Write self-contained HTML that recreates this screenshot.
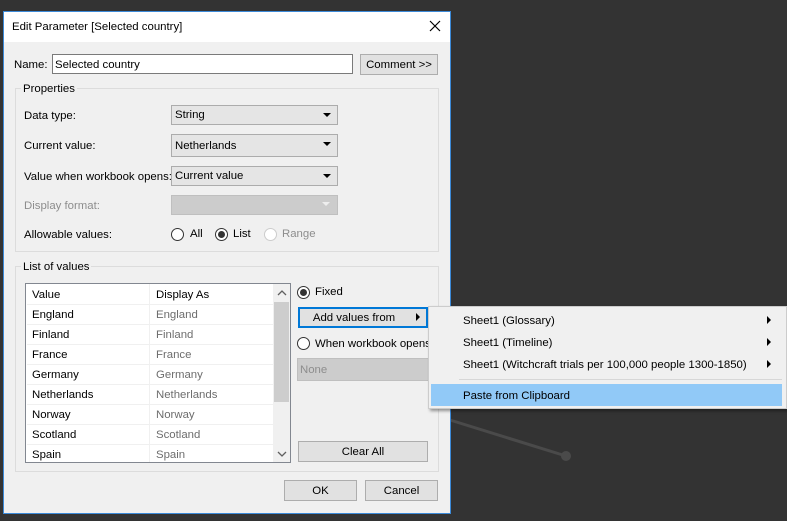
<!DOCTYPE html>
<html><head><meta charset="utf-8"><style>
*{box-sizing:border-box;margin:0;padding:0}
body{width:787px;height:521px;background:#333;position:relative;overflow:hidden;font:11.4px "Liberation Sans",sans-serif;color:#000}
.a{position:absolute}
.t{position:absolute;white-space:nowrap;line-height:16px}
.dlg{left:3px;top:11px;width:448px;height:503px;background:#f0f0f0;border:1px solid #3c8ad8}
.btn{position:absolute;background:#e1e1e1;border:1px solid #adadad;text-align:center;line-height:20px}
.cb{position:absolute;background:#e5e5e5;border:1px solid #acacac;padding-left:3px;line-height:19px}
.cb:after{content:"";position:absolute;right:6px;top:7px;border-left:4px solid transparent;border-right:4px solid transparent;border-top:4px solid #000}
.grp{position:absolute;border:1px solid #dcdcdc}
.rad{position:absolute;width:13px;height:13px;border:1px solid #333;border-radius:50%;background:#fff}
.rad.on:after{content:"";position:absolute;left:2px;top:2px;width:7px;height:7px;border-radius:50%;background:#333}
.row{position:absolute;left:1px;width:248px;height:20px;border-bottom:1px solid #f0f0f0}
.row span{position:absolute;top:4px}
.row .c2{left:129px;color:#6d6d6d}
.arr{position:absolute;border-top:4px solid transparent;border-bottom:4px solid transparent;border-left:4px solid #000}
</style></head><body>
<svg class="a" style="left:0;top:0" width="787" height="521"><line x1="450" y1="420" x2="566" y2="456" stroke="#4a4a4a" stroke-width="3"/><circle cx="566" cy="456" r="5" fill="#4a4a4a"/></svg>
<div class="a dlg">
<div class="a" style="left:0;top:0;width:446px;height:30px;background:#fff"></div>
</div>
<div class="t" style="left:12px;top:19px">Edit Parameter [Selected country]</div>
<svg class="a" style="left:429px;top:20px" width="12" height="12"><path d="M1 1L11 11M11 1L1 11" stroke="#000" stroke-width="1.2"/></svg>
<div class="t" style="left:14px;top:57px">Name:</div>
<div class="a" style="left:52px;top:54px;width:301px;height:20px;background:#fff;border:1px solid #7a7a7a"></div>
<div class="t" style="left:55px;top:57px">Selected country</div>
<div class="btn" style="left:360px;top:54px;width:78px;height:21px">Comment &gt;&gt;</div>
<div class="grp" style="left:15px;top:88px;width:424px;height:164px"></div>
<div class="t" style="left:21px;top:81px;background:#f0f0f0;padding:0 2px">Properties</div>
<div class="t" style="left:24px;top:108px">Data type:</div>
<div class="cb" style="left:171px;top:105px;width:167px;height:20px;line-height:19px">String</div>
<div class="t" style="left:24px;top:138px">Current value:</div>
<div class="cb" style="left:171px;top:134px;width:167px;height:23px;line-height:22px">Netherlands</div>
<div class="t" style="left:24px;top:169px">Value when workbook opens:</div>
<div class="cb" style="left:171px;top:166px;width:167px;height:20px">Current value</div>
<div class="t" style="left:24px;top:198px;color:#8d8d8d">Display format:</div>
<div class="a" style="left:171px;top:195px;width:167px;height:20px;background:#ccc;border:1px solid #bfbfbf"></div>
<div class="a" style="left:322px;top:202px;border-left:4px solid transparent;border-right:4px solid transparent;border-top:4px solid #eee"></div>
<div class="t" style="left:24px;top:227px">Allowable values:</div>
<div class="rad" style="left:171px;top:228px"></div><div class="t" style="left:190px;top:226px">All</div>
<div class="rad on" style="left:215px;top:228px"></div><div class="t" style="left:233px;top:226px">List</div>
<div class="rad" style="left:264px;top:228px;border-color:#ccc"></div><div class="t" style="left:282px;top:226px;color:#8d8d8d">Range</div>
<div class="grp" style="left:15px;top:266px;width:424px;height:206px"></div>
<div class="t" style="left:21px;top:259px;background:#f0f0f0;padding:0 2px">List of values</div>
<div class="a" style="left:25px;top:283px;width:266px;height:180px;background:#fff;border:1px solid #828790;overflow:hidden">
<div class="row" style="top:1px"><span style="left:5px">Value</span><span style="left:129px">Display As</span></div>
<div class="row" style="top:21px"><span style="left:5px">England</span><span class="c2">England</span></div>
<div class="row" style="top:41px"><span style="left:5px">Finland</span><span class="c2">Finland</span></div>
<div class="row" style="top:61px"><span style="left:5px">France</span><span class="c2">France</span></div>
<div class="row" style="top:81px"><span style="left:5px">Germany</span><span class="c2">Germany</span></div>
<div class="row" style="top:101px"><span style="left:5px">Netherlands</span><span class="c2">Netherlands</span></div>
<div class="row" style="top:121px"><span style="left:5px">Norway</span><span class="c2">Norway</span></div>
<div class="row" style="top:141px"><span style="left:5px">Scotland</span><span class="c2">Scotland</span></div>
<div class="row" style="top:161px"><span style="left:5px">Spain</span><span class="c2">Spain</span></div>
<div class="a" style="left:123px;top:0;width:1px;height:180px;background:#f0f0f0"></div>
<div class="a" style="left:247px;top:0;width:17px;height:178px;background:#f0f0f0"></div>
<div class="a" style="left:248px;top:18px;width:15px;height:100px;background:#cdcdcd"></div>
<svg class="a" style="left:250px;top:5px" width="12" height="170"><path d="M2 6L6 2L10 6M2 163L6 167L10 163" fill="none" stroke="#606060" stroke-width="1.3"/></svg>
</div>
<div class="rad on" style="left:297px;top:286px"></div><div class="t" style="left:315px;top:284px">Fixed</div>
<div class="btn" style="left:298px;top:307px;width:130px;height:21px;border:2px solid #0078d7;line-height:18px;padding-right:18px">Add values from</div>
<div class="arr" style="left:416px;top:313px"></div>
<div class="rad" style="left:297px;top:337px"></div><div class="t" style="left:315px;top:336px">When workbook opens</div>
<div class="a" style="left:297px;top:358px;width:132px;height:23px;background:#ccc;border:1px solid #bfbfbf"></div>
<div class="t" style="left:300px;top:362px;color:#8d8d8d">None</div>
<div class="btn" style="left:298px;top:441px;width:130px;height:21px">Clear All</div>
<div class="btn" style="left:284px;top:480px;width:73px;height:21px">OK</div>
<div class="btn" style="left:365px;top:480px;width:73px;height:21px">Cancel</div>
<div class="a" style="left:428px;top:306px;width:359px;height:103px;background:#f0f0f0;border:1px solid #ccc;box-shadow:2px 2px 3px rgba(0,0,0,.4)"></div>
<div class="t" style="left:463px;top:313px">Sheet1 (Glossary)</div><div class="arr" style="left:767px;top:316px"></div>
<div class="t" style="left:463px;top:335px">Sheet1 (Timeline)</div><div class="arr" style="left:767px;top:338px"></div>
<div class="t" style="left:463px;top:357px">Sheet1 (Witchcraft trials per 100,000 people 1300-1850)</div><div class="arr" style="left:767px;top:360px"></div>
<div class="a" style="left:459px;top:379px;width:323px;height:1px;background:#d7d7d7"></div>
<div class="a" style="left:431px;top:384px;width:351px;height:22px;background:#91c9f7"></div>
<div class="t" style="left:463px;top:388px">Paste from Clipboard</div>
</body></html>
